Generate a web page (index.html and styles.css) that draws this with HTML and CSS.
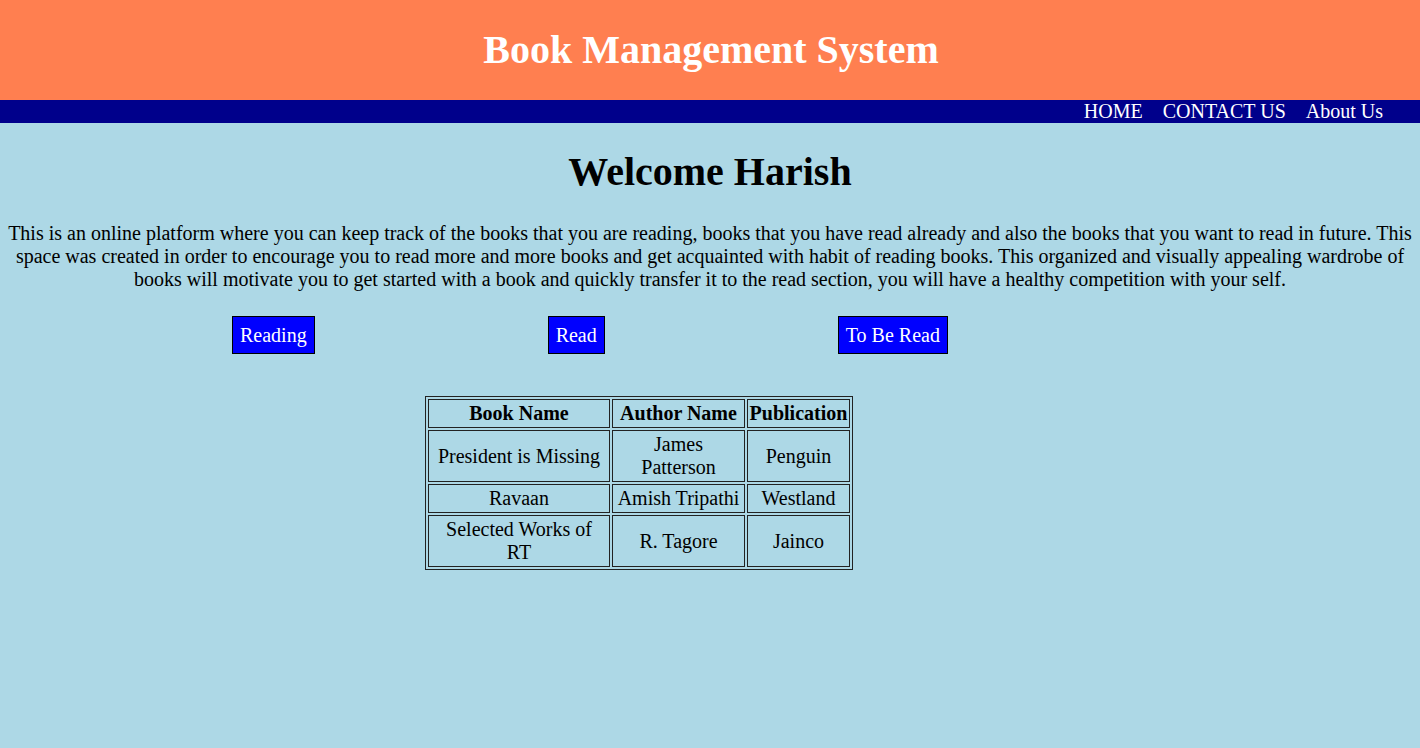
FILE: index.html
```html
<!DOCTYPE html>
<html>
<head>
<meta charset="utf-8">
<title>Book Management System</title>
<link rel="stylesheet" href="styles.css">
</head>
<body>
<header class="banner">
  <h1 class="banner-title">Book Management System</h1>
</header>
<nav class="nav">
  <a class="nav-link" href="#">HOME</a>
  <a class="nav-link" href="#">CONTACT US</a>
  <a class="nav-link" href="#">About Us</a>
</nav>
<main class="main">
  <h1 class="welcome">Welcome Harish</h1>
  <p class="intro">This is an online platform where you can keep track of the books that you are reading, books that you have read already and also the books that you want to read in future. This space was created in order to encourage you to read more and more books and get acquainted with habit of reading books. This organized and visually appealing wardrobe of books will motivate you to get started with a book and quickly transfer it to the read section, you will have a healthy competition with your self.</p>
  <div class="buttons">
    <a class="btn" href="#">Reading</a>
    <a class="btn" href="#">Read</a>
    <a class="btn" href="#">To Be Read</a>
  </div>
  <div class="table-wrap">
    <table class="books">
      <thead>
        <tr>
          <th class="c1">Book Name</th>
          <th class="c2">Author Name</th>
          <th class="c3">Publication</th>
        </tr>
      </thead>
      <tbody>
        <tr>
          <td class="c1">President is Missing</td>
          <td class="c2">James Patterson</td>
          <td class="c3">Penguin</td>
        </tr>
        <tr>
          <td class="c1">Ravaan</td>
          <td class="c2">Amish Tripathi</td>
          <td class="c3">Westland</td>
        </tr>
        <tr>
          <td class="c1">Selected Works of RT</td>
          <td class="c2">R. Tagore</td>
          <td class="c3">Jainco</td>
        </tr>
      </tbody>
    </table>
  </div>
</main>
</body>
</html>
```

FILE: styles.css
```css
html, body {
  margin: 0;
  padding: 0;
}

body {
  background: #add8e6;
  font-family: "Liberation Serif", "Times New Roman", serif;
  color: #000;
  min-height: 748px;
}

.banner {
  background: #ff7f50;
  height: 100px;
  display: flex;
  align-items: center;
  justify-content: center;
}

.banner-title {
  margin: 0;
  padding-left: 2px;
  color: #fff;
  font-size: 40px;
  font-weight: bold;
  line-height: 46px;
}

.nav {
  background: #00008b;
  height: 23px;
  display: flex;
  justify-content: flex-end;
  gap: 20px;
  padding-right: 37px;
}

.nav-link {
  color: #fff;
  text-decoration: none;
  font-size: 20px;
  line-height: 23px;
}

.main {
  padding: 0 8px;
}

.welcome {
  margin: 0;
  padding-top: 26px;
  text-align: center;
  font-size: 40px;
  line-height: 46px;
  font-weight: bold;
}

.intro {
  margin: 27px 0 0;
  text-align: center;
  font-size: 20px;
  line-height: 23px;
}

.buttons {
  display: flex;
  gap: 233px;
  padding-left: 224px;
  margin-top: 25px;
}

.btn {
  display: inline-block;
  background: #0000ff;
  color: #fff;
  text-decoration: none;
  font-size: 20px;
  line-height: 22px;
  padding: 7px 7px;
  border: 1px solid #000;
}

.table-wrap {
  padding-left: 417px;
  margin-top: 42px;
}

.books {
  border: 1px solid #222;
  border-spacing: 2px;
  font-size: 20px;
  line-height: 23px;
  table-layout: fixed;
}

.books th,
.books td {
  border: 1px solid #222;
  text-align: center;
  vertical-align: middle;
}

.books th {
  font-weight: bold;
}

.c1 {
  width: 172px;
  padding: 2px 4px;
}

.c2 {
  width: 123px;
  padding: 2px 4px;
}

.c3 {
  width: 99px;
  padding: 2px 1px;
}
```
